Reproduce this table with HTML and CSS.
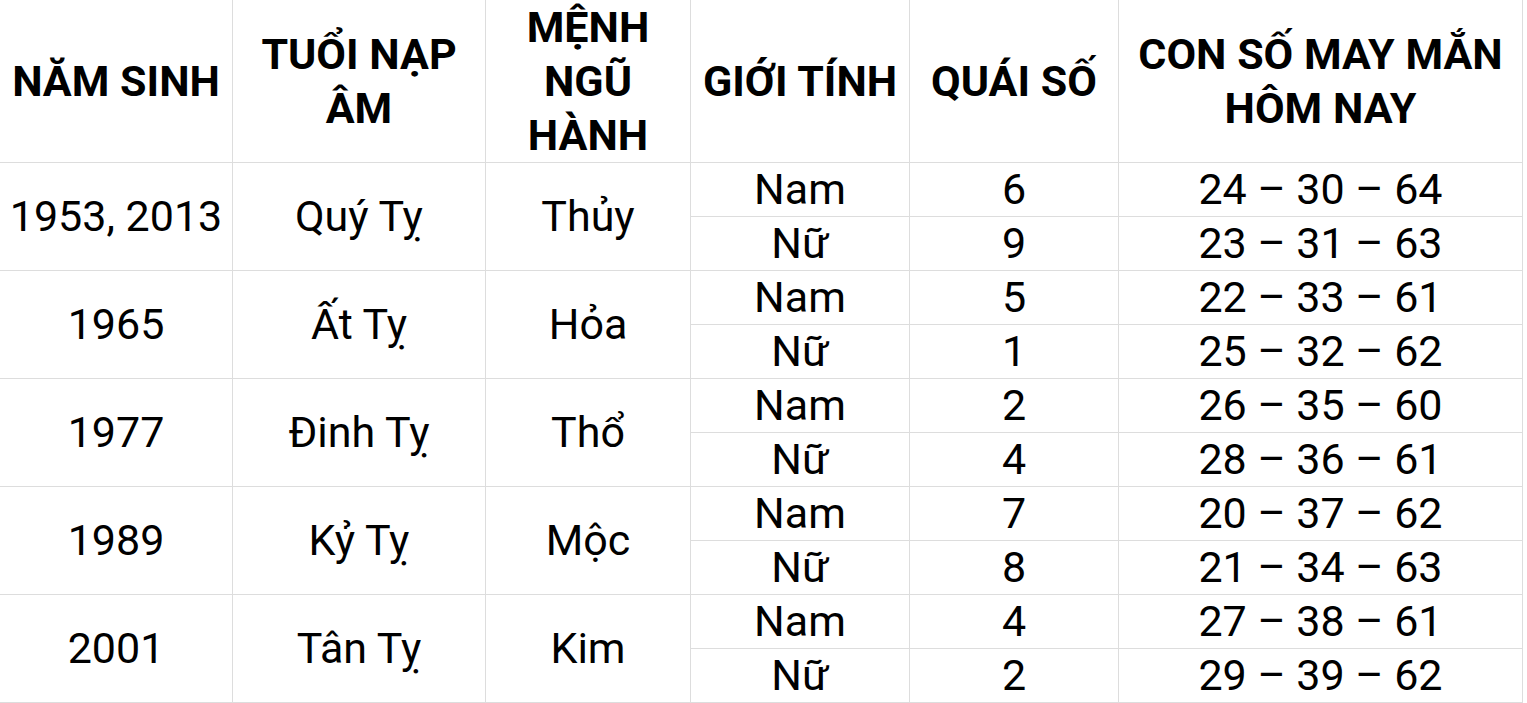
FILE: index.html
```html
<!DOCTYPE html>
<html lang="vi">
<head>
<meta charset="utf-8">
<title>Con số may mắn</title>
<link rel="stylesheet" href="styles.css">
</head>
<body>
<div class="grid">
  <div class="cell head">NĂM SINH</div>
  <div class="cell head">TUỔI NẠP ÂM</div>
  <div class="cell head">MỆNH NGŨ HÀNH</div>
  <div class="cell head">GIỚI TÍNH</div>
  <div class="cell head">QUÁI SỐ</div>
  <div class="cell head last">CON SỐ MAY MẮN HÔM NAY</div>

  <div class="cell span">1953, 2013</div>
  <div class="cell span">Quý Tỵ</div>
  <div class="cell span">Thủy</div>
  <div class="cell">Nam</div>
  <div class="cell">6</div>
  <div class="cell last">24 – 30 – 64</div>
  <div class="cell">Nữ</div>
  <div class="cell">9</div>
  <div class="cell last">23 – 31 – 63</div>

  <div class="cell span">1965</div>
  <div class="cell span">Ất Tỵ</div>
  <div class="cell span">Hỏa</div>
  <div class="cell">Nam</div>
  <div class="cell">5</div>
  <div class="cell last">22 – 33 – 61</div>
  <div class="cell">Nữ</div>
  <div class="cell">1</div>
  <div class="cell last">25 – 32 – 62</div>

  <div class="cell span">1977</div>
  <div class="cell span">Đinh Tỵ</div>
  <div class="cell span">Thổ</div>
  <div class="cell">Nam</div>
  <div class="cell">2</div>
  <div class="cell last">26 – 35 – 60</div>
  <div class="cell">Nữ</div>
  <div class="cell">4</div>
  <div class="cell last">28 – 36 – 61</div>

  <div class="cell span">1989</div>
  <div class="cell span">Kỷ Tỵ</div>
  <div class="cell span">Mộc</div>
  <div class="cell">Nam</div>
  <div class="cell">7</div>
  <div class="cell last">20 – 37 – 62</div>
  <div class="cell">Nữ</div>
  <div class="cell">8</div>
  <div class="cell last">21 – 34 – 63</div>

  <div class="cell span">2001</div>
  <div class="cell span">Tân Tỵ</div>
  <div class="cell span">Kim</div>
  <div class="cell">Nam</div>
  <div class="cell">4</div>
  <div class="cell last">27 – 38 – 61</div>
  <div class="cell">Nữ</div>
  <div class="cell">2</div>
  <div class="cell last">29 – 39 – 62</div>
</div>
</body>
</html>
```
FILE: styles.css
```css
html, body {
  margin: 0;
  padding: 0;
  background: #ffffff;
}

body {
  font-family: Roboto, "Liberation Sans", sans-serif;
  color: #000000;
  overflow: hidden;
}

.grid {
  display: grid;
  grid-template-columns: 233px 253px 205px 219px 209px 404px;
  grid-template-rows: 163px repeat(10, 54px);
  width: 1527px;
}

.cell {
  display: flex;
  align-items: center;
  justify-content: center;
  text-align: center;
  box-sizing: border-box;
  border-right: 1px solid #dddddd;
  border-bottom: 1px solid #dddddd;
  padding: 0 4px;
  font-size: 43px;
  line-height: 53px;
  font-weight: 400;
}

.head {
  font-size: 43px;
  font-weight: 700;
  line-height: 54px;
}

.span {
  grid-row: span 2;
}
```
